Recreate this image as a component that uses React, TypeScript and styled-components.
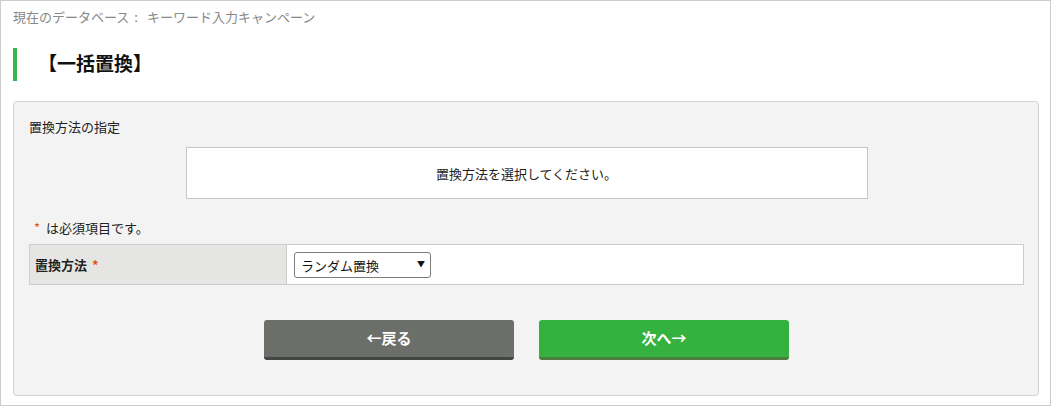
import React from "react";
import styled, { createGlobalStyle } from "styled-components";

const GlobalStyle = createGlobalStyle`
  html, body {
    margin: 0;
    padding: 0;
    background: #ffffff;
  }
  body {
    font-family: "Noto Sans CJK JP", "Noto Sans", sans-serif;
    color: #222;
  }
  * { box-sizing: border-box; }
`;

const Page = styled.div`
  width: 1051px;
  height: 406px;
  border: 1px solid #cccccc;
  display: flex;
  flex-direction: column;
`;

const DbLine = styled.div`
  padding: 6px 0 0 12px;
  font-size: 13px;
  line-height: 20px;
  color: #888888;
`;

const Separator = styled.span`
  padding-left: 5px;
  letter-spacing: 3px;
`;

const Heading = styled.h1`
  margin: 21px 0 0 12px;
  height: 33px;
  border-left: 4px solid #3bb449;
  padding: 0 0 5px 21px;
  display: flex;
  align-items: center;
  font-size: 19px;
  font-weight: 700;
  color: #111;
`;

const Panel = styled.section`
  margin: 20px 11px 0 12px;
  height: 295px;
  background: #f3f3f3;
  border: 1px solid #d2d2d2;
  border-radius: 4px;
  padding: 15px 14px 0 15px;
  display: flex;
  flex-direction: column;
`;

const SectionTitle = styled.div`
  font-size: 13px;
  line-height: 20px;
  color: #222;
`;

const MessageBox = styled.div`
  align-self: center;
  margin-top: 10px;
  width: 682px;
  height: 52px;
  background: #ffffff;
  border: 1px solid #c6c6c6;
  display: flex;
  align-items: center;
  justify-content: center;
  font-size: 13px;
  color: #222;
`;

const Note = styled.div`
  margin-top: 19px;
  padding-left: 4px;
  font-size: 13px;
  line-height: 20px;
  color: #222;
`;

const Required = styled.span<{ $after?: boolean }>`
  color: #e2541b;
  margin: ${(p) => (p.$after ? "0 0 0 5px" : "0 6px 0 1px")};
`;

const FormTable = styled.div`
  margin-top: 6px;
  height: 41px;
  border: 1px solid #cccccc;
  display: grid;
  grid-template-columns: 257px 1fr;
  background: #ffffff;
`;

const LabelCell = styled.div`
  background: #e5e6e3;
  border-right: 1px solid #cccccc;
  padding-left: 5px;
  display: flex;
  align-items: center;
  font-size: 13px;
  font-weight: 700;
  color: #222;
`;

const FieldCell = styled.div`
  padding-left: 7px;
  display: flex;
  align-items: center;
`;

const SelectWrap = styled.div`
  position: relative;
  width: 137px;
  height: 26px;
`;

const Select = styled.select`
  appearance: none;
  -webkit-appearance: none;
  width: 100%;
  height: 100%;
  border: 1px solid #7c7c7c;
  border-radius: 3px;
  background: #ffffff;
  padding: 0 0 0 6px;
  font-family: "Noto Sans CJK JP", "Noto Sans", sans-serif;
  font-size: 13px;
  color: #111;
`;

const Caret = styled.span`
  position: absolute;
  right: 6px;
  top: 8px;
  font-size: 8px;
  line-height: 8px;
  color: #111;
  pointer-events: none;
`;

const Actions = styled.div`
  margin-top: 35px;
  display: flex;
  justify-content: center;
  gap: 25px;
`;

const Button = styled.button<{ $tone: "back" | "next" }>`
  width: 250px;
  height: 40px;
  border: none;
  border-radius: 3px;
  border-bottom: 3px solid ${(p) => (p.$tone === "next" ? "#4f7d3e" : "#444644")};
  background: ${(p) => (p.$tone === "next" ? "#35b13f" : "#6b6e69")};
  color: #ffffff;
  font-family: "Noto Sans CJK JP", "Noto Sans", sans-serif;
  font-size: 15px;
  font-weight: 700;
  padding: 0 0 3px;
  cursor: pointer;
`;

export default function App() {
  return (
    <>
      <GlobalStyle />
      <Page>
        <DbLine>
          現在のデータベース<Separator>: </Separator>キーワード入力キャンペーン
        </DbLine>
        <Heading>【一括置換】</Heading>
        <Panel>
          <SectionTitle>置換方法の指定</SectionTitle>
          <MessageBox>置換方法を選択してください。</MessageBox>
          <Note>
            <Required>*</Required>は必須項目です。
          </Note>
          <FormTable>
            <LabelCell>
              置換方法<Required $after>*</Required>
            </LabelCell>
            <FieldCell>
              <SelectWrap>
                <Select defaultValue="random">
                  <option value="random">ランダム置換</option>
                </Select>
                <Caret>▼</Caret>
              </SelectWrap>
            </FieldCell>
          </FormTable>
          <Actions>
            <Button $tone="back">←戻る</Button>
            <Button $tone="next">次へ→</Button>
          </Actions>
        </Panel>
      </Page>
    </>
  );
}
